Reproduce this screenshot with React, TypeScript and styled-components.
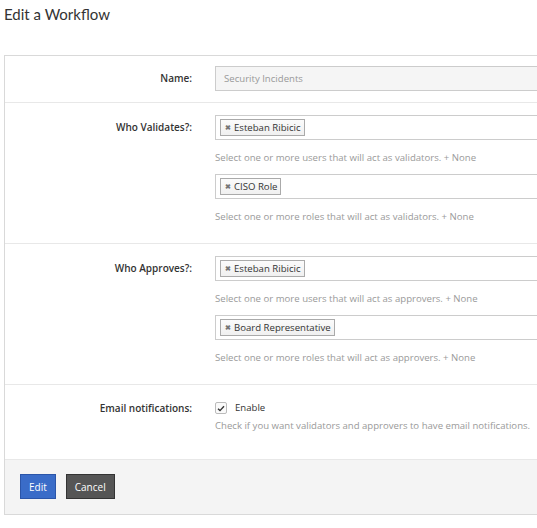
import React from 'react';
import styled, { createGlobalStyle } from 'styled-components';

const GlobalStyle = createGlobalStyle`
  html, body {
    margin: 0;
    padding: 0;
    background: #fff;
    overflow: hidden;
  }
  body {
    font-family: 'Open Sans', 'Liberation Sans', sans-serif;
    color: #333;
  }
`;

const Page = styled.div`
  width: 537px;
  height: 528px;
  overflow: hidden;
  padding-left: 4px;
  box-sizing: border-box;
`;

const Title = styled.h1`
  margin: 0;
  padding-top: 4px;
  font-family: Lato, 'Open Sans', sans-serif;
  font-weight: 400;
  font-size: 15px;
  line-height: 20px;
  color: #333;
`;

const Panel = styled.form`
  margin-top: 31px;
  width: 600px;
  border: 1px solid #d9d9d9;
  border-right: none;
  background: #fff;
`;

const Row = styled.div<{ $pad?: string }>`
  display: grid;
  grid-template-columns: 187px 1fr;
  column-gap: 23px;
  padding: ${({ $pad }) => $pad || '12px 0 10px'};
  border-bottom: 1px solid #e8e8e8;
`;

const Label = styled.label<{ $top?: number }>`
  text-align: right;
  font-size: 10px;
  font-weight: 600;
  color: #333;
  line-height: 16px;
  padding-top: ${({ $top }) => $top ?? 4}px;
`;

const Field = styled.div`
  display: flex;
  flex-direction: column;
  min-width: 0;
`;

const TextInput = styled.div`
  height: 25px;
  box-sizing: border-box;
  border: 1px solid #ccc;
  background: #f5f5f5;
  padding: 0 8px;
  font-size: 9.6px;
  line-height: 23px;
  color: #999;
`;

const MultiSelect = styled.div`
  height: 25px;
  box-sizing: border-box;
  border: 1px solid #ccc;
  background: #fff;
  padding: 3px 4px;
  display: flex;
  align-items: flex-start;
`;

const Tag = styled.span`
  display: inline-flex;
  align-items: center;
  gap: 3px;
  height: 17px;
  box-sizing: border-box;
  padding: 0 3px 0 4px;
  border: 1px solid #aaa;
  background: linear-gradient(#fbfbfb, #f0f0f0);
  font-size: 9.6px;
  color: #333;
  line-height: 15px;
`;

const Remove = styled.span`
  font-size: 7px;
  color: #777;
  font-weight: 700;
`;

const Help = styled.p<{ $top?: number }>`
  margin: ${({ $top }) => $top ?? 10}px 0 8px;
  font-size: 9.6px;
  line-height: 16px;
  color: #9a9a9a;
  white-space: nowrap;
`;

const CheckLine = styled.label`
  display: flex;
  align-items: center;
  gap: 8px;
  font-size: 9.6px;
  line-height: 16px;
  color: #333;
`;

const Box = styled.span`
  width: 12px;
  height: 12px;
  box-sizing: border-box;
  border: 1px solid #bbb;
  border-radius: 2px;
  background: #fafafa;
  display: inline-flex;
  align-items: center;
  justify-content: center;
`;

const Footer = styled.div`
  background: #f4f4f4;
  padding: 14px 15px 15px;
  display: flex;
  gap: 10px;
`;

const Button = styled.button<{ $variant: 'primary' | 'dark' }>`
  height: 25px;
  box-sizing: border-box;
  padding: 0 8px;
  font-family: 'Open Sans', 'Liberation Sans', sans-serif;
  font-size: 10px;
  color: #fff;
  cursor: pointer;
  border: 1px solid ${({ $variant }) => ($variant === 'primary' ? '#2b55a8' : '#333')};
  background: ${({ $variant }) => ($variant === 'primary' ? '#3a6cc8' : '#555')};
`;

const SelectField = ({ tag, help }: { tag: string; help: string }) => (
  <>
    <MultiSelect>
      <Tag>
        <Remove>✖</Remove>
        {tag}
      </Tag>
    </MultiSelect>
    <Help>{help}</Help>
  </>
);

export default function App() {
  return (
    <Page>
      <GlobalStyle />
      <Title>Edit a Workflow</Title>
      <Panel>
        <Row $pad="10px 0 11px">
          <Label $top={4}>Name:</Label>
          <Field>
            <TextInput>Security Incidents</TextInput>
          </Field>
        </Row>
        <Row>
          <Label>Who Validates?:</Label>
          <Field>
            <SelectField tag="Esteban Ribicic" help="Select one or more users that will act as validators. + None" />
            <SelectField tag="CISO Role" help="Select one or more roles that will act as validators. + None" />
          </Field>
        </Row>
        <Row>
          <Label>Who Approves?:</Label>
          <Field>
            <SelectField tag="Esteban Ribicic" help="Select one or more users that will act as approvers. + None" />
            <SelectField tag="Board Representative" help="Select one or more roles that will act as approvers. + None" />
          </Field>
        </Row>
        <Row $pad="15px 0 17px">
          <Label $top={0}>Email notifications:</Label>
          <Field>
            <CheckLine>
              <Box>
                <svg width="8" height="7" viewBox="0 0 8 7">
                  <path d="M1 3.8 L3 5.6 L7 1.2" fill="none" stroke="#333" strokeWidth="1.4" />
                </svg>
              </Box>
              Enable
            </CheckLine>
            <Help $top={2}>Check if you want validators and approvers to have email notifications.</Help>
          </Field>
        </Row>
        <Footer>
          <Button type="button" $variant="primary">Edit</Button>
          <Button type="button" $variant="dark">Cancel</Button>
        </Footer>
      </Panel>
    </Page>
  );
}
